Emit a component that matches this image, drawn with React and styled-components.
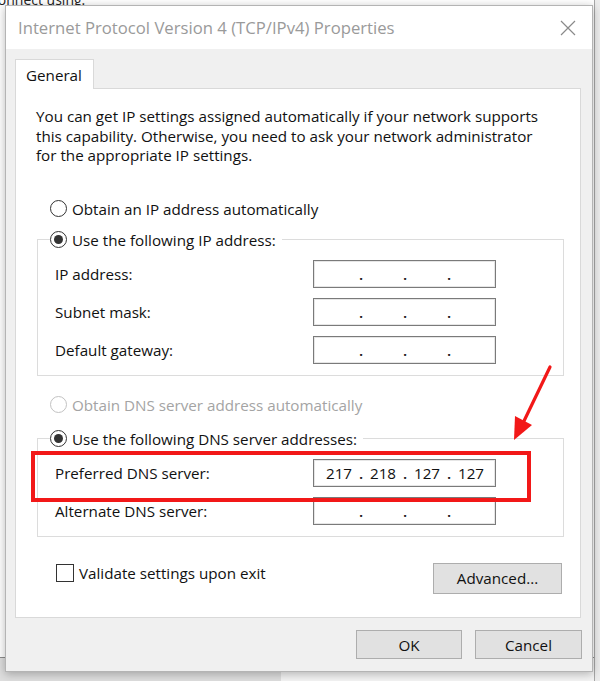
import styled, { createGlobalStyle } from "styled-components";

const GlobalStyle = createGlobalStyle`
  html, body {
    margin: 0;
    padding: 0;
    background: #f4f4f4;
  }
  * {
    box-sizing: border-box;
  }
`;

export default function App() {
  return (
    <>
      <GlobalStyle />
      <Desktop>
        <BehindWindow>
          <BehindText>Connect using:</BehindText>
          <BehindStatus>
            <BehindStatusPart />
          </BehindStatus>
        </BehindWindow>
        <Dialog>
          <TitleBar>
            <Title>Internet Protocol Version 4 (TCP/IPv4) Properties</Title>
            <CloseIcon />
          </TitleBar>
          <Body>
            <TabStrip>
              <Tab>General</Tab>
            </TabStrip>
            <Panel>
              <Description>
                You can get IP settings assigned automatically if your network supports
                <br />
                this capability. Otherwise, you need to ask your network administrator
                <br />
                for the appropriate IP settings.
              </Description>

              <OptionRow>
                <Radio />
                <OptionLabel>Obtain an IP address automatically</OptionLabel>
              </OptionRow>

              <Group>
                <Legend>
                  <Radio checked />
                  <OptionLabel>Use the following IP address:</OptionLabel>
                </Legend>
                <Field label="IP address:" />
                <Field label="Subnet mask:" />
                <Field label="Default gateway:" />
              </Group>

              <OptionRow $top={19}>
                <Radio disabled />
                <OptionLabel $disabled>Obtain DNS server address automatically</OptionLabel>
              </OptionRow>

              <Group $top={14}>
                <Legend>
                  <Radio checked />
                  <OptionLabel>Use the following DNS server addresses:</OptionLabel>
                </Legend>
                <Field label="Preferred DNS server:" value={["217", "218", "127", "127"]} />
                <Field label="Alternate DNS server:" />
              </Group>

              <BottomRow>
                <CheckRow>
                  <CheckBox />
                  <OptionLabel>Validate settings upon exit</OptionLabel>
                </CheckRow>
                <Button $width={129}>Advanced...</Button>
              </BottomRow>

              <Highlight />
              <Arrow />
            </Panel>
            <Footer>
              <Button $width={106} $height={29}>OK</Button>
              <Button $width={107} $height={29}>Cancel</Button>
            </Footer>
          </Body>
        </Dialog>
      </Desktop>
    </>
  );
}

function Field({ label, value = ["", "", "", ""] }) {
  return (
    <FieldRow>
      <FieldLabel>{label}</FieldLabel>
      <IpBox>
        {value.map((part, i) => (
          <IpPart key={i}>
            <IpSegment>{part}</IpSegment>
            {i < 3 && <IpDot>.</IpDot>}
          </IpPart>
        ))}
      </IpBox>
    </FieldRow>
  );
}

function Radio({ checked, disabled }) {
  return (
    <RadioCircle $disabled={disabled}>{checked && <RadioDot />}</RadioCircle>
  );
}

function CloseIcon() {
  return (
    <svg width="16" height="16" viewBox="0 0 16 16">
      <path d="M1 1 L15 15 M15 1 L1 15" stroke="#8a8a8a" strokeWidth="1.2" fill="none" />
    </svg>
  );
}

function Arrow() {
  return (
    <ArrowSvg width="50" height="90" viewBox="0 0 50 90">
      <path d="M44 8 L18 62" stroke="#f21818" strokeWidth="3.2" strokeLinecap="round" fill="none" />
      <path d="M8 81 L9 57 L26 66 Z" fill="#f21818" />
    </ArrowSvg>
  );
}

//Styles
const font = `"Segoe UI", "Open Sans", "Noto Sans", sans-serif`;
const textSize = "15.2px";

const Desktop = styled.div`
  position: relative;
  width: 600px;
  height: 681px;
  overflow: hidden;
  background: #ececec;
  font-family: ${font};
`;

const BehindWindow = styled.div`
  position: absolute;
  left: -12px;
  top: -10px;
  width: 607px;
  height: 700px;
  background: #ffffff;
  border: 1px solid #a8a8a8;
  display: flex;
  flex-direction: column;
  justify-content: space-between;
`;

const BehindText = styled.div`
  font-size: 14px;
  color: #222;
  line-height: 18px;
`;

const BehindStatus = styled.div`
  height: 32px;
  border-top: 1px solid #8c8c8c;
  background: #f4f4f4;
`;

const BehindStatusPart = styled.div`
  width: 292px;
  height: 100%;
  background: #dedede;
`;

const Dialog = styled.div`
  position: absolute;
  left: 5px;
  top: 5px;
  width: 588px;
  height: 667px;
  background: #f0f0f0;
  border: 1px solid #b4b4b4;
  box-shadow: 0 2px 9px rgba(0, 0, 0, 0.28);
  display: flex;
  flex-direction: column;
`;

const TitleBar = styled.div`
  height: 43px;
  flex: none;
  background: #ffffff;
  display: flex;
  align-items: center;
  justify-content: space-between;
  padding: 0 16px 0 12px;
`;

const Title = styled.div`
  font-size: 16.7px;
  color: #9a9a9a;
`;

const Body = styled.div`
  flex: 1;
  display: flex;
  flex-direction: column;
  padding: 10px 10px 0 9px;
`;

const TabStrip = styled.div`
  display: flex;
`;

const Tab = styled.div`
  width: 79px;
  height: 30px;
  margin-bottom: -1px;
  position: relative;
  z-index: 1;
  background: #ffffff;
  border: 1px solid #d9d9d9;
  border-bottom: none;
  display: flex;
  align-items: center;
  padding-left: 10px;
  font-size: ${textSize};
  color: #111;
`;

const Panel = styled.div`
  position: relative;
  width: 566px;
  height: 530px;
  background: #ffffff;
  border: 1px solid #d9d9d9;
  padding: 0 16px 0 21px;
  display: flex;
  flex-direction: column;
`;

const Description = styled.p`
  margin: 18px 0 0 -1px;
  font-size: ${textSize};
  line-height: 19.5px;
  color: #111;
  white-space: nowrap;
`;

const OptionRow = styled.div`
  display: flex;
  align-items: center;
  height: 20px;
  margin: ${({ $top }) => $top ?? 33}px 0 0 13px;
`;

const OptionLabel = styled.span`
  font-size: ${textSize};
  color: ${({ $disabled }) => ($disabled ? "#a4a4a4" : "#111")};
  margin-left: 5px;
  white-space: nowrap;
`;

const RadioCircle = styled.span`
  width: 17px;
  height: 17px;
  flex: none;
  border-radius: 50%;
  border: 1px solid ${({ $disabled }) => ($disabled ? "#c2c2c2" : "#333")};
  background: #fff;
  display: flex;
  align-items: center;
  justify-content: center;
`;

const RadioDot = styled.span`
  width: 9px;
  height: 9px;
  border-radius: 50%;
  background: #333;
`;

const Group = styled.fieldset`
  margin: ${({ $top }) => $top ?? 11}px 0 0 0;
  padding: 0 0 11px 17px;
  border: 1px solid #dcdcdc;
  min-width: 0;
  display: flex;
  flex-direction: column;
  gap: 10px;
`;

const Legend = styled.legend`
  display: flex;
  align-items: center;
  height: 20px;
  padding: 0 6px 0 0;
  margin-left: -5px;
  margin-bottom: 10px;
  background: #fff;
`;

const FieldRow = styled.div`
  display: grid;
  grid-template-columns: 258px 183px;
  align-items: center;
  height: 28px;
`;

const FieldLabel = styled.span`
  font-size: ${textSize};
  color: #111;
`;

const IpBox = styled.div`
  height: 28px;
  border: 1px solid #7a7a7a;
  box-shadow: inset 0 0 0 1px #e6e6e6;
  display: flex;
  align-items: center;
  padding-left: 5px;
  background: #fff;
`;

const IpPart = styled.div`
  display: flex;
  align-items: center;
`;

const IpSegment = styled.span`
  width: 40px;
  text-align: center;
  font-size: ${textSize};
  color: #111;
`;

const IpDot = styled.span`
  width: 4px;
  text-align: center;
  font-size: ${textSize};
  font-weight: 600;
  color: #222;
`;

const BottomRow = styled.div`
  margin-top: 26px;
  display: flex;
  justify-content: space-between;
  align-items: flex-start;
  padding-right: 2px;
`;

const CheckRow = styled.div`
  display: flex;
  align-items: center;
  margin: 0 0 0 19px;
`;

const CheckBox = styled.span`
  width: 18px;
  height: 18px;
  border: 1px solid #333;
  background: #fff;
`;

const Button = styled.div`
  width: ${({ $width }) => $width}px;
  height: ${({ $height }) => $height ?? 31}px;
  background: #e1e1e1;
  border: 1px solid #adadad;
  display: flex;
  align-items: center;
  justify-content: center;
  font-size: ${textSize};
  color: #111;
`;

const Footer = styled.div`
  display: flex;
  justify-content: flex-end;
  gap: 13px;
  margin-top: 12px;
  width: 567px;
`;

const Highlight = styled.div`
  position: absolute;
  left: 15px;
  top: 362px;
  width: 500px;
  height: 51px;
  border: 4px solid #f21818;
  pointer-events: none;
`;

const ArrowSvg = styled.svg`
  position: absolute;
  left: 490px;
  top: 270px;
`;
